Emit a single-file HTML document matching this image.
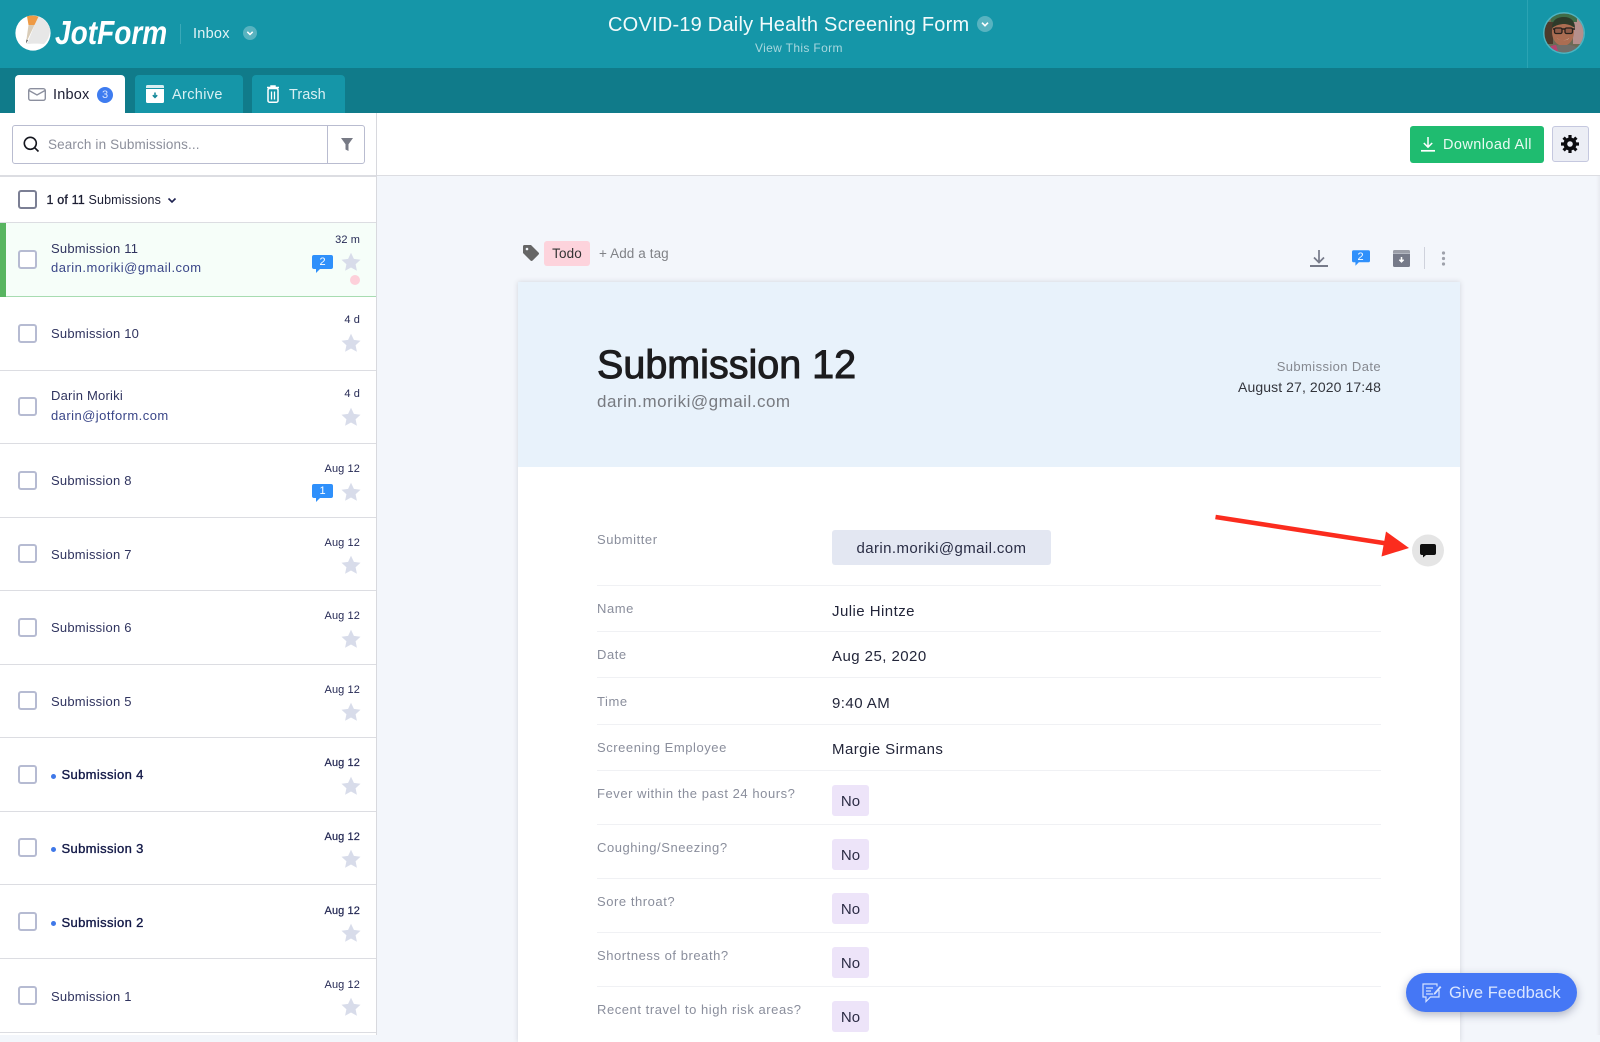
<!DOCTYPE html>
<html lang="en"><head><meta charset="utf-8"><title>JotForm Inbox</title>
<style>
html,body{margin:0;padding:0}
body{width:1600px;height:1035px;overflow:hidden;position:relative;background:#f3f6fb;font-family:"Liberation Sans",sans-serif;color:#2a2e55}
.a,.it>*{position:absolute;white-space:nowrap}
svg{display:block;overflow:visible}
.it{position:absolute;left:0;width:376px;height:72px;border-bottom:1.5px solid #dcdde2}
.cb{left:18px;top:26px;width:15px;height:15px;border:2px solid #b6bbd2;border-radius:3px;background:#fff}
.n{left:51px;top:26.5px;font-size:13px;line-height:20px;letter-spacing:.22px;color:#30345f}
.b{-webkit-text-stroke:.35px #141a48;color:#141a48;letter-spacing:.35px}
.dot{left:51px;top:35px;width:5px;height:5px;border-radius:50%;background:#3f78e8}
.d{right:16px;top:15.5px;font-size:11px;line-height:18px;letter-spacing:.1px;color:#262a55}
.st{left:341px;top:37px;width:20px;height:20px}
.l{position:absolute;left:597px;font-size:13px;line-height:20px;letter-spacing:.55px;color:#8a8e9c;white-space:nowrap}
.v{position:absolute;left:832px;font-size:15px;line-height:20px;letter-spacing:.45px;color:#23263a;white-space:nowrap}
.hr{position:absolute;left:597px;width:784px;height:1px;background:#f0f1f4}
.no{position:absolute;left:832px;width:37px;height:31px;background:#ede4f9;border-radius:3px;font-size:15px;line-height:33px;text-align:center;color:#2c2c45;letter-spacing:.1px}
</style></head><body>
<svg width="0" height="0" style="position:absolute"><defs>
<symbol id="star" viewBox="0 0 20 20"><path d="M10 .8l2.9 6.100 6.600.8-4.900 4.500 1.300 6.600L10 15.500l-5.900 3.300 1.300-6.600L.5 7.700l6.600-.8z" fill="#d8dcea"/></symbol>
<symbol id="bub" viewBox="0 0 21 18"><path d="M2 0h17a2 2 0 012 2v10a2 2 0 01-2 2H8l-4 4v-4H2a2 2 0 01-2-2V2a2 2 0 012-2z" fill="#2f90fb"/></symbol>
</defs></svg>

<!-- Top header -->
<div class="a" style="left:0;top:0;width:1600px;height:68px;background:#1596a8"></div>
<div class="a" style="left:0;top:68px;width:1600px;height:45px;background:#107b8a"></div>

<svg class="a" style="left:15px;top:15px" width="36" height="36" viewBox="0 0 36 36">
<circle cx="18" cy="18" r="17.600" fill="#fff"/>
<path d="M23 1.500C29 3.500 33.500 8 35 14.500 35 20 33 25 29 29 24 28.500 17 28.500 12 29z" fill="#e7e7e7"/>
<path d="M12 1.300C16 .2 20 .4 23.500 1.600L19.500 10 13.500 10z" fill="#ee9a45"/>
<path d="M13.500 10H19.500L11 28z" fill="#d9ccb8"/>
<path d="M11.500 24.500L13 25.300 11 28.500z" fill="#555"/>
</svg>
<div class="a" style="left:55px;top:14px;font-size:33px;line-height:38px;font-weight:bold;font-style:italic;color:#fff;transform:scaleX(.85);transform-origin:0 0">JotForm</div>
<div class="a" style="left:180px;top:24px;width:1px;height:20px;background:#3aa9b8"></div>
<div class="a" style="left:193px;top:24px;font-size:14.500px;line-height:20px;letter-spacing:.25px;color:#e2f3f5">Inbox</div>
<svg class="a" style="left:243px;top:26px" width="14" height="14" viewBox="0 0 14 14"><circle cx="7" cy="7" r="7" fill="#58b3c0"/><path d="M4.300 5.800L7 8.500l2.700-2.700" fill="none" stroke="#fff" stroke-width="1.500"/></svg>

<div class="a" style="left:608px;top:13px;font-size:20px;line-height:24px;letter-spacing:.22px;color:#f2fafb">COVID-19 Daily Health Screening Form</div>
<svg class="a" style="left:977px;top:16px" width="16" height="16" viewBox="0 0 16 16"><circle cx="8" cy="8" r="8" fill="#58b3c0"/><path d="M5 6.700L8 9.700l3-3" fill="none" stroke="#fff" stroke-width="1.600"/></svg>
<div class="a" style="left:755px;top:39px;font-size:12px;line-height:18px;letter-spacing:.35px;color:#a8d7de">View This Form</div>

<div class="a" style="left:1527px;top:0;width:1px;height:68px;background:#2ba3b3"></div>
<svg class="a" style="left:1543px;top:12px" width="42" height="42" viewBox="0 0 42 42">
<defs><clipPath id="av"><circle cx="21" cy="21" r="19.500"/></clipPath></defs>
<circle cx="21" cy="21" r="21" fill="#4cb4c2"/>
<g clip-path="url(#av)">
<rect width="42" height="42" fill="#6d6a55"/>
<rect x="30" y="6" width="14" height="26" fill="#b58f8c"/>
<rect x="0" y="10" width="10" height="22" fill="#4b3a2c"/>
<path d="M8 2h26v8H8z" fill="#3f6d48"/>
<ellipse cx="20" cy="20" rx="11" ry="14" fill="#ab6d52"/>
<path d="M9 16C9 8 14 5 21 5s11 4 11 11c-4-3-8-4-11-4s-8 1-12 4z" fill="#2e3a2a"/>
<path d="M10 17h22" stroke="#26201c" stroke-width="1.500"/>
<rect x="11.500" y="16" width="7.500" height="5.500" rx="1.500" fill="#8f5b48" stroke="#26201c" stroke-width="1.300"/>
<rect x="22" y="16" width="7.500" height="5.500" rx="1.500" fill="#8f5b48" stroke="#26201c" stroke-width="1.300"/>
<path d="M14 26c3 3 9 3 12 0-1 3-10 3-12 0z" fill="#e6d6cc"/>
<path d="M4 42c1-6 7-9 12-9h10c5 0 10 3 12 9z" fill="#6f6e6a"/>
<path d="M3 42c1-6 5-9 10-9l3 9z" fill="#b6436f"/>
</g></svg>

<!-- Tabs -->
<div class="a" style="left:15px;top:75px;width:110px;height:38px;background:#fff;border-radius:4px 4px 0 0"></div>
<svg class="a" style="left:28px;top:88px" width="18" height="13" viewBox="0 0 18 13"><rect x=".7" y=".7" width="16.600" height="11.600" rx="2" fill="none" stroke="#8b8f9e" stroke-width="1.400"/><path d="M1 2.500l8 4.500 8-4.500" fill="none" stroke="#8b8f9e" stroke-width="1.400"/></svg>
<div class="a" style="left:53px;top:85px;font-size:14.500px;line-height:20px;letter-spacing:.2px;color:#1c1e33">Inbox</div>
<div class="a" style="left:97px;top:87px;width:16px;height:16px;border-radius:50%;background:#3e7cf0;color:#d9e6ff;font-size:11px;line-height:16px;text-align:center">3</div>

<div class="a" style="left:135px;top:75px;width:108px;height:38px;background:#1596a8;border-radius:4px 4px 0 0"></div>
<svg class="a" style="left:146px;top:85px" width="18" height="18" viewBox="0 0 18 18"><path d="M1.500 0h15A1.500 1.500 0 0118 1.500V3H0V1.500A1.500 1.500 0 011.500 0z" fill="#d7eef1"/><path d="M0 4h18v12.500a1.500 1.500 0 01-1.500 1.500h-15A1.500 1.500 0 010 16.500z" fill="#fff"/><path d="M9 7.500v4.500M6.800 10.200L9 12.400l2.200-2.200" fill="none" stroke="#14889a" stroke-width="1.500"/></svg>
<div class="a" style="left:172px;top:85px;font-size:14.500px;line-height:20px;letter-spacing:.35px;color:#d9f0f3">Archive</div>

<div class="a" style="left:252px;top:75px;width:93px;height:38px;background:#1596a8;border-radius:4px 4px 0 0"></div>
<svg class="a" style="left:266px;top:85px" width="14" height="18" viewBox="0 0 14 18"><path d="M1 2.500h12M5 2.500V1h4v1.500" fill="none" stroke="#fff" stroke-width="1.500"/><rect x="2" y="3.500" width="10" height="13.700" rx="1.500" fill="none" stroke="#fff" stroke-width="1.500"/><path d="M5.500 6.500v8M8.500 6.500v8" stroke="#fff" stroke-width="1.300"/></svg>
<div class="a" style="left:289px;top:85px;font-size:14.500px;line-height:20px;letter-spacing:.05px;color:#d9f0f3">Trash</div>

<!-- Main top bar -->
<div class="a" style="left:0;top:113px;width:1600px;height:62px;background:#fff;border-bottom:1.500px solid #dcdde2"></div>
<div class="a" style="left:0;top:113px;width:376px;height:922px;background:#fff;border-right:1.500px solid #d8d9de"></div>
<div class="a" style="left:0;top:175px;width:376px;height:1.500px;background:#dcdde2"></div>
<div class="a" style="left:0;top:222px;width:376px;height:1.500px;background:#dcdde2"></div>

<!-- Search -->
<div class="a" style="left:12px;top:125px;width:351px;height:37px;border:1px solid #b9bcd0;border-radius:3px;background:#fff"></div>
<div class="a" style="left:327px;top:126px;width:1px;height:37px;background:#b9bcd0"></div>
<svg class="a" style="left:23px;top:136px" width="17" height="17" viewBox="0 0 17 17"><circle cx="7.300" cy="7.300" r="6" fill="none" stroke="#15171f" stroke-width="1.600"/><path d="M11.800 11.800l3.700 3.700" stroke="#15171f" stroke-width="1.600"/></svg>
<div class="a" style="left:48px;top:135px;font-size:13.500px;line-height:20px;letter-spacing:.13px;color:#8c8f9b">Search in Submissions...</div>
<svg class="a" style="left:341px;top:138px" width="12" height="13" viewBox="0 0 12 13"><path d="M0 0h12L7.500 6.300V13l-3-1.500V6.300z" fill="#777a85"/></svg>

<!-- Select row -->
<div class="a" style="left:18px;top:190px;width:15px;height:15px;border:2px solid #7b7f94;border-radius:3px;background:#fff"></div>
<div class="a" style="left:46.500px;top:190px;font-size:12.500px;line-height:20px;letter-spacing:.15px;color:#1c1e33"><span style="-webkit-text-stroke:.3px #1c1e33">1 of 11</span> Submissions</div>
<svg class="a" style="left:167px;top:197px" width="10" height="7" viewBox="0 0 10 7"><path d="M1.500 1.500L5 5l3.500-3.500" fill="none" stroke="#1e2250" stroke-width="1.600"/></svg>

<!-- List -->
<div class="it" style="top:223px;height:72.500px;background:#f6fef9;border-bottom:1.500px solid #a7dcb1">
  <div style="left:0;top:0;width:6px;height:74px;background:#58b560"></div>
  <div class="cb" style="top:26.500px"></div>
  <div class="n" style="top:15.500px">Submission 11</div>
  <div class="n" style="top:35px;color:#3a4688;letter-spacing:.5px">darin.moriki@gmail.com</div>
  <div class="d" style="top:7.500px">32 m</div>
  <svg style="left:312px;top:31.500px" width="21" height="18"><use href="#bub"/></svg>
  <div style="left:312px;top:31.500px;width:21px;font-size:11px;line-height:15px;text-align:center;color:#fff">2</div>
  <svg class="st" style="top:28.500px"><use href="#star"/></svg>
  <div style="left:350px;top:51.500px;width:10px;height:10px;border-radius:50%;background:#fdd0da"></div>
</div>
<div class="it" style="top:297.500px"><div class="cb"></div><div class="n" style="top:26px">Submission 10</div><div class="d" style="top:13.500px">4 d</div><svg class="st" style="top:35.500px"><use href="#star"/></svg></div>
<div class="it" style="top:371px"><div class="cb"></div><div class="n" style="top:15px">Darin Moriki</div><div class="n" style="top:35px;color:#3a4688;letter-spacing:.45px">darin@jotform.com</div><div class="d" style="top:13.500px">4 d</div><svg class="st" style="top:35.500px"><use href="#star"/></svg></div>
<div class="it" style="top:444.500px"><div class="cb"></div><div class="n">Submission 8</div><div class="d">Aug 12</div>
  <svg style="left:312px;top:39px" width="21" height="18"><use href="#bub"/></svg><div style="left:312px;top:39px;width:21px;font-size:11px;line-height:15px;text-align:center;color:#fff">1</div>
  <svg class="st"><use href="#star"/></svg></div>
<div class="it" style="top:518px"><div class="cb"></div><div class="n">Submission 7</div><div class="d">Aug 12</div><svg class="st"><use href="#star"/></svg></div>
<div class="it" style="top:591.500px"><div class="cb"></div><div class="n">Submission 6</div><div class="d">Aug 12</div><svg class="st"><use href="#star"/></svg></div>
<div class="it" style="top:665px"><div class="cb"></div><div class="n">Submission 5</div><div class="d">Aug 12</div><svg class="st"><use href="#star"/></svg></div>
<div class="it" style="top:738.500px"><div class="cb"></div><div class="dot"></div><div class="n b" style="left:61.500px">Submission 4</div><div class="d b" style="-webkit-text-stroke:.2px #141a48;letter-spacing:.1px">Aug 12</div><svg class="st"><use href="#star"/></svg></div>
<div class="it" style="top:812px"><div class="cb"></div><div class="dot"></div><div class="n b" style="left:61.500px">Submission 3</div><div class="d b" style="-webkit-text-stroke:.2px #141a48;letter-spacing:.1px">Aug 12</div><svg class="st"><use href="#star"/></svg></div>
<div class="it" style="top:886px"><div class="cb"></div><div class="dot"></div><div class="n b" style="left:61.500px">Submission 2</div><div class="d b" style="-webkit-text-stroke:.2px #141a48;letter-spacing:.1px">Aug 12</div><svg class="st"><use href="#star"/></svg></div>
<div class="it" style="top:960px"><div class="cb"></div><div class="n">Submission 1</div><div class="d">Aug 12</div><svg class="st"><use href="#star"/></svg></div>

<!-- Top right buttons -->
<div class="a" style="left:1410px;top:126px;width:134px;height:37px;background:#1fbc70;border-radius:3px"></div>
<svg class="a" style="left:1421px;top:137px" width="14" height="15" viewBox="0 0 14 15"><path d="M7 0v10M2.800 6L7 10.200 11.200 6" fill="none" stroke="#fff" stroke-width="1.500"/><path d="M0 13.800h14" stroke="#fff" stroke-width="1.700"/></svg>
<div class="a" style="left:1443px;top:135px;font-size:14.500px;line-height:20px;letter-spacing:.42px;color:#eafaf2">Download All</div>
<div class="a" style="left:1552px;top:126px;width:35px;height:34px;background:#eceef5;border:1px solid #c5c8df;border-radius:3px"></div>
<svg class="a" style="left:1561px;top:135px" width="18" height="18" viewBox="0 0 18 18"><path d="M9 2.500a6.500 6.500 0 100 13 6.500 6.500 0 000-13zm0 3.700a2.800 2.800 0 110 5.600 2.800 2.800 0 010-5.600z" fill="#0c0c10" fill-rule="evenodd"/><g stroke="#0c0c10" stroke-width="3.200"><path d="M9 0v3.500M9 14.500V18M0 9h3.500M14.500 9H18M2.600 2.600l2.500 2.500M12.900 12.900l2.500 2.500M2.600 15.400l2.500-2.500M12.900 5.100l2.500-2.500"/></g></svg>
<div class="a" style="left:1596px;top:176px;width:4px;height:859px;background:linear-gradient(90deg,#f3f6fb,#e9ebf0)"></div>

<!-- Tag row -->
<svg class="a" style="left:523px;top:245px" width="16" height="16" viewBox="0 0 16 16"><path d="M1.500 0H8l7.500 7.500a1.500 1.500 0 010 2.100l-5.900 5.900a1.500 1.500 0 01-2.100 0L0 8V1.500A1.500 1.500 0 011.500 0zM4 2.700a1.300 1.300 0 100 2.600 1.300 1.300 0 000-2.600z" fill="#666" fill-rule="evenodd"/></svg>
<div class="a" style="left:544px;top:241px;width:46px;height:25px;background:#fdd3dc;border-radius:3px;font-size:13.500px;line-height:25px;text-align:center;color:#333;letter-spacing:.1px">Todo</div>
<div class="a" style="left:599px;top:244px;font-size:13.500px;line-height:20px;letter-spacing:.1px;color:#808287">+ Add a tag</div>

<svg class="a" style="left:1310px;top:250px" width="18" height="17" viewBox="0 0 18 17"><path d="M9 0v12M4 7.500L9 12.500l5-5" fill="none" stroke="#767a89" stroke-width="1.700"/><path d="M0 16h18" stroke="#767a89" stroke-width="2"/></svg>
<svg class="a" style="left:1351.500px;top:250px" width="18" height="16"><use href="#bub" width="18" height="16"/></svg>
<div class="a" style="left:1351.500px;top:250.500px;width:18px;text-align:center;font-size:11px;line-height:13px;color:#fff">2</div>
<svg class="a" style="left:1393px;top:250px" width="17" height="17" viewBox="0 0 17 17"><path d="M1.500 0h14A1.500 1.500 0 0117 1.500V3H0V1.500A1.500 1.500 0 011.500 0z" fill="#9b9ea8"/><path d="M0 3.500h17V15.500a1.500 1.500 0 01-1.500 1.500h-14A1.500 1.500 0 010 15.500z" fill="#767a89"/><path d="M8.500 7v4.500M6.400 9.700l2.100 2.100 2.100-2.100" fill="none" stroke="#fff" stroke-width="1.500"/></svg>
<div class="a" style="left:1424px;top:247px;width:1px;height:22px;background:#cfd2dc"></div>
<svg class="a" style="left:1441px;top:251px" width="5" height="15" viewBox="0 0 5 15"><g fill="#9ea1ab"><circle cx="2.500" cy="2" r="1.600"/><circle cx="2.500" cy="7.500" r="1.600"/><circle cx="2.500" cy="13" r="1.600"/></g></svg>

<!-- Card -->
<div class="a" style="left:518px;top:282px;width:942px;height:760px;background:#fff;box-shadow:0 0 5px rgba(60,60,80,.18)"></div>
<div class="a" style="left:518px;top:282px;width:942px;height:185px;background:#e8f2fb"></div>
<div class="a" style="left:597px;top:339px;font-size:39.500px;line-height:52px;color:#1c1c1e;-webkit-text-stroke:1px #1c1c1e">Submission 12</div>
<div class="a" style="left:597px;top:391px;font-size:17px;line-height:22px;letter-spacing:.5px;color:#777a80">darin.moriki@gmail.com</div>
<div class="a" style="right:219px;top:358px;font-size:13px;line-height:18px;letter-spacing:.4px;color:#85888f">Submission Date</div>
<div class="a" style="right:219px;top:377px;font-size:14px;line-height:20px;letter-spacing:.1px;color:#33353c">August 27, 2020 17:48</div>

<div class="l" style="top:530px">Submitter</div>
<div class="a" style="left:832px;top:530px;width:219px;height:35px;background:#e3e7f2;border-radius:3px;font-size:15px;line-height:37px;text-align:center;letter-spacing:.4px;color:#2a2d45">darin.moriki@gmail.com</div>
<div class="hr" style="top:585px"></div>
<div class="l" style="top:599px">Name</div><div class="v" style="top:602px">Julie Hintze</div>
<div class="hr" style="top:631px"></div>
<div class="l" style="top:645px">Date</div><div class="v" style="top:647px">Aug 25, 2020</div>
<div class="hr" style="top:677px"></div>
<div class="l" style="top:692px">Time</div><div class="v" style="top:694px">9:40 AM</div>
<div class="hr" style="top:724px"></div>
<div class="l" style="top:738px">Screening Employee</div><div class="v" style="top:740px">Margie Sirmans</div>
<div class="hr" style="top:770px"></div>
<div class="l" style="top:784px">Fever within the past 24 hours?</div><div class="no" style="top:785px">No</div>
<div class="hr" style="top:824px"></div>
<div class="l" style="top:838px">Coughing/Sneezing?</div><div class="no" style="top:839px">No</div>
<div class="hr" style="top:878px"></div>
<div class="l" style="top:892px">Sore throat?</div><div class="no" style="top:893px">No</div>
<div class="hr" style="top:932px"></div>
<div class="l" style="top:946px">Shortness of breath?</div><div class="no" style="top:947px">No</div>
<div class="hr" style="top:986px"></div>
<div class="l" style="top:1000px">Recent travel to high risk areas?</div><div class="no" style="top:1001px">No</div>

<!-- Arrow and comment -->
<svg class="a" style="left:1200px;top:500px" width="250" height="80" viewBox="0 0 250 80">
<path d="M15.500 17L190 44" stroke="#fb2c1e" stroke-width="4.500"/>
<path d="M209 48L186 31.500l-4.500 25z" fill="#fb2c1e"/>
<circle cx="228" cy="50.500" r="16" fill="#e5e5e5"/>
<path d="M222 44h12a2 2 0 012 2v7a2 2 0 01-2 2h-8l-3 2.500V55H222a2 2 0 01-2-2v-7a2 2 0 012-2z" fill="#0f0f0f"/>
</svg>

<!-- Feedback -->
<div class="a" style="left:1406px;top:973px;width:171px;height:39px;background:#4577f5;border-radius:20px;box-shadow:0 3px 9px rgba(40,50,90,.35)"></div>
<svg class="a" style="left:1422px;top:983px" width="20" height="20" viewBox="0 0 20 20"><path d="M15 3.500V1H1v13h3v4.500L8.500 14H17V7" fill="none" stroke="#d5e2ff" stroke-width="1.200"/><path d="M4 5h7M4 8h5M4 11h7" stroke="#d5e2ff" stroke-width="1.200"/><path d="M12 10l6-7 1.400 1.200-6 7-1.900.600z" fill="#d5e2ff"/></svg>
<div class="a" style="left:1449px;top:983px;font-size:16.500px;line-height:20px;letter-spacing:.05px;color:#dbe6ff">Give Feedback</div>
</body></html>
